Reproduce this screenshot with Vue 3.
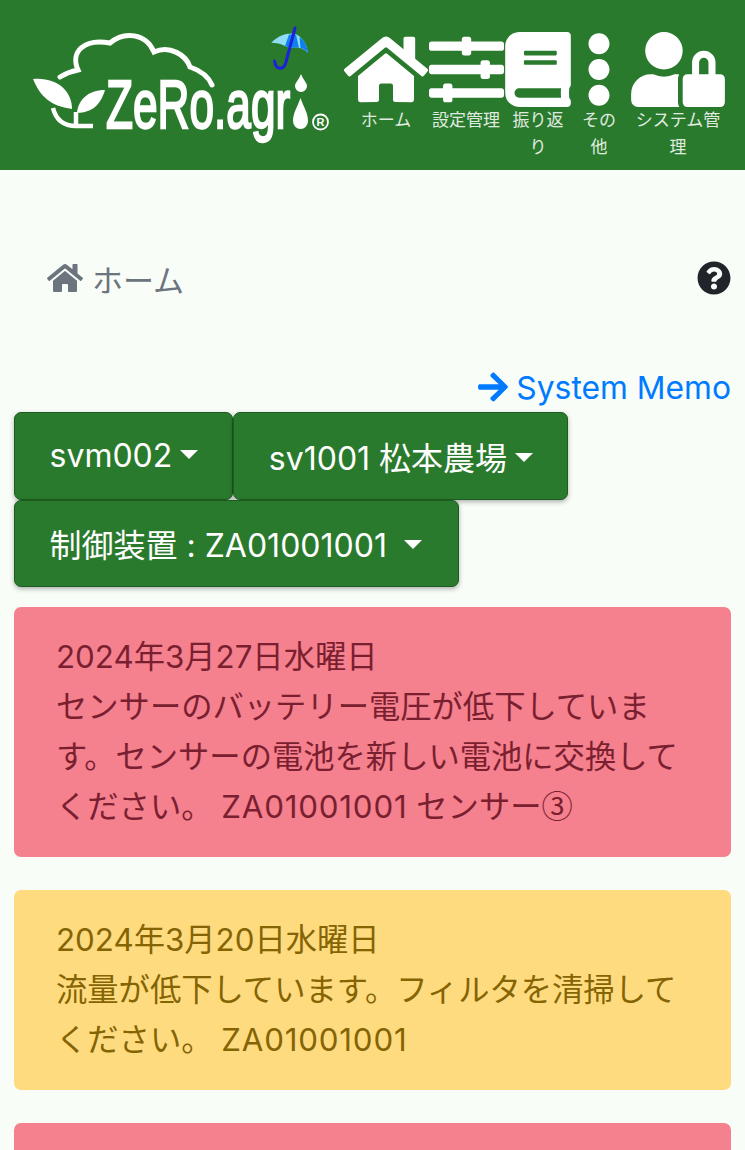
<template>
  <div class="page">
    <header class="topbar">
      <svg class="logo" viewBox="0 0 344 170" width="344" height="170">
        <!-- cloud -->
        <path class="cloud" d="M60 77 Q68 72 78 70 C70 52 84 38 110 43 C124 31 146 33 154 52 C170 45 186 55 190 67 C202 71 209 78 212 85" />
        <!-- sprout -->
        <path class="leaf" d="M33 79 C58 77 72 92 72 109 C50 106 40 96 33 79 Z" />
        <path class="leaf" d="M105 90 C88 90 78 100 77 113 C92 112 100 106 105 90 Z" />
        <path class="stem" d="M53 108 C56 120 64 126 76 126 H93 M76 112 V126" />
        <!-- name -->
        <text class="brand" transform="translate(106 128) scale(0.65 1)">ZeRo.agr</text>
        <path class="leaf" d="M301 74 C304 81 307 83 307 86 A6 6 0 0 1 295 86 C295 83 298 81 301 74 Z" />
        <path class="leaf" d="M300.5 98 C304 108 308 113 308 121 A7.5 8 0 0 1 293 121 C293 113 297 108 300.5 98 Z" />
        <circle class="reg" cx="320.5" cy="122" r="7.5" />
        <text class="reg-r" x="320.5" y="126" text-anchor="middle">R</text>
        <!-- umbrella -->
        <path d="M271.3 42.7 C278 36 285 33 294 33.5 C301 35 307 44 308 53 C305 50 302 48 299 48 C296 47 293 47 290 48 C288 47 286 46 285 46 C281 43.5 276 43 271.3 42.7 Z" fill="#8fdcf5" />
        <path d="M289 34.5 L296 34.5 L299 48 C296 47 293 47 290 48 C288 47 286 46 285 46 Z" fill="#1080f0" />
        <path d="M299.5 37 C304 40 307 46 308 53 C305 50 303 48.5 300.5 48 Z" fill="#1080f0" />
        <path d="M295 28 L286 62 C284 70 276 71 274.5 61" fill="none" stroke="#1c22dc" stroke-width="3" stroke-linecap="round" />
      </svg>

      <nav class="menu">
        <a class="menu-item home">
          <span class="icon-box">
            <svg viewBox="0 0 576 512" width="84" height="75"><path d="M280.37 148.26L96 300.11V464a16 16 0 0 0 16 16l112.06-.29a16 16 0 0 0 15.92-16V368a16 16 0 0 1 16-16h64a16 16 0 0 1 16 16v95.64a16 16 0 0 0 16 16.05L464 480a16 16 0 0 0 16-16V300L295.67 148.26a12.19 12.19 0 0 0-15.3 0zM571.6 251.47L488 182.56V44.05a12 12 0 0 0-12-12h-56a12 12 0 0 0-12 12v72.61L318.47 43a48 48 0 0 0-61 0L4.34 251.47a12 12 0 0 0-1.6 16.9l25.5 31A12 12 0 0 0 45.15 301l235.22-193.74a12.19 12.19 0 0 1 15.3 0L530.9 301a12 12 0 0 0 16.9-1.6l25.5-31a12 12 0 0 0-1.7-16.93z" /></svg>
          </span>
          <span class="menu-label">ホーム</span>
        </a>
        <a class="menu-item settings">
          <span class="icon-box">
            <svg viewBox="0 0 512 512" width="75" height="75"><path d="M496 384H160v-16c0-8.8-7.2-16-16-16h-32c-8.8 0-16 7.2-16 16v16H16c-8.8 0-16 7.2-16 16v32c0 8.8 7.2 16 16 16h80v16c0 8.8 7.2 16 16 16h32c8.8 0 16-7.2 16-16v-16h336c8.8 0 16-7.2 16-16v-32c0-8.8-7.2-16-16-16zm0-160h-80v-16c0-8.8-7.2-16-16-16h-32c-8.8 0-16 7.2-16 16v16H16c-8.8 0-16 7.2-16 16v32c0 8.8 7.2 16 16 16h336v16c0 8.8 7.2 16 16 16h32c8.8 0 16-7.2 16-16v-16h80c8.8 0 16-7.2 16-16v-32c0-8.8-7.2-16-16-16zm0-160H288V48c0-8.8-7.2-16-16-16h-32c-8.8 0-16 7.2-16 16v16H16C7.2 64 0 71.2 0 80v32c0 8.8 7.2 16 16 16h208v16c0 8.8 7.2 16 16 16h32c8.8 0 16-7.2 16-16v-16h208c8.8 0 16-7.2 16-16V80c0-8.8-7.2-16-16-16z" /></svg>
          </span>
          <span class="menu-label">設定管理</span>
        </a>
        <a class="menu-item review">
          <span class="icon-box">
            <svg viewBox="0 0 448 512" width="66" height="75"><path d="M448 360V24c0-13.3-10.7-24-24-24H96C43 0 0 43 0 96v320c0 53 43 96 96 96h328c13.3 0 24-10.7 24-24v-16c0-7.5-3.5-14.3-8.9-18.7-4.2-15.4-4.2-59.3 0-74.7 5.4-4.3 8.9-11.1 8.9-18.6zM128 134c0-3.3 2.7-6 6-6h212c3.3 0 6 2.7 6 6v20c0 3.3-2.7 6-6 6H134c-3.3 0-6-2.7-6-6v-20zm0 64c0-3.3 2.7-6 6-6h212c3.3 0 6 2.7 6 6v20c0 3.3-2.7 6-6 6H134c-3.3 0-6-2.7-6-6v-20zm253.4 250H96c-17.7 0-32-14.3-32-32 0-17.6 14.4-32 32-32h285.4c-1.9 17.1-1.9 46.9 0 64z" /></svg>
          </span>
          <span class="menu-label">振り返り</span>
        </a>
        <a class="menu-item other">
          <span class="icon-box">
            <svg viewBox="0 0 192 512" width="28" height="75"><path d="M96 184c39.8 0 72 32.2 72 72s-32.2 72-72 72-72-32.2-72-72 32.2-72 72-72zM24 80c0 39.8 32.2 72 72 72s72-32.2 72-72S135.8 8 96 8 24 40.2 24 80zm0 352c0 39.8 32.2 72 72 72s72-32.2 72-72-32.2-72-72-72-72 32.2-72 72z" /></svg>
          </span>
          <span class="menu-label">その他</span>
        </a>
        <a class="menu-item system">
          <span class="icon-box">
            <svg viewBox="0 0 640 512" width="94" height="75"><path d="M224 256A128 128 0 1 0 96 128a128 128 0 0 0 128 128zm96 64a63.08 63.08 0 0 1 8.1-30.5c-4.8-.5-9.5-1.5-14.5-1.5h-16.7a174.08 174.08 0 0 1-145.8 0h-16.7A134.43 134.43 0 0 0 0 422.4V464a48 48 0 0 0 48 48h280.9a63.54 63.54 0 0 1-8.9-32zm288-32h-32v-80a80 80 0 0 0-160 0v80h-32a32 32 0 0 0-32 32v160a32 32 0 0 0 32 32h224a32 32 0 0 0 32-32V320a32 32 0 0 0-32-32zM528 288H464v-80a32 32 0 0 1 64 0z" /></svg>
          </span>
          <span class="menu-label">システム管理</span>
        </a>
      </nav>
    </header>

    <main class="content">
      <div class="crumb-row">
        <div class="crumb">
          <svg viewBox="0 0 576 512" width="36" height="32"><path d="M280.37 148.26L96 300.11V464a16 16 0 0 0 16 16l112.06-.29a16 16 0 0 0 15.92-16V368a16 16 0 0 1 16-16h64a16 16 0 0 1 16 16v95.64a16 16 0 0 0 16 16.05L464 480a16 16 0 0 0 16-16V300L295.67 148.26a12.19 12.19 0 0 0-15.3 0zM571.6 251.47L488 182.56V44.05a12 12 0 0 0-12-12h-56a12 12 0 0 0-12 12v72.61L318.47 43a48 48 0 0 0-61 0L4.34 251.47a12 12 0 0 0-1.6 16.9l25.5 31A12 12 0 0 0 45.15 301l235.22-193.74a12.19 12.19 0 0 1 15.3 0L530.9 301a12 12 0 0 0 16.9-1.6l25.5-31a12 12 0 0 0-1.7-16.93z" /></svg>
          <span>ホーム</span>
        </div>
        <svg class="help" viewBox="0 0 512 512" width="34" height="34"><path d="M504 256c0 136.997-111.043 248-248 248S8 392.997 8 256C8 119.083 119.043 8 256 8s248 111.083 248 248zM262.655 90c-54.497 0-89.255 22.957-116.549 63.758-3.536 5.286-2.353 12.415 2.715 16.258l34.699 26.31c5.205 3.947 12.621 3.008 16.665-2.122 17.864-22.658 30.113-35.797 57.303-35.797 20.429 0 45.698 13.148 45.698 32.958 0 14.976-12.363 22.667-32.534 33.976C247.128 238.528 216 254.941 216 296v4c0 6.627 5.373 12 12 12h56c6.627 0 12-5.373 12-12v-1.333c0-28.462 83.186-29.647 83.186-106.667 0-58.002-60.165-102-116.531-102zM256 338c-25.365 0-46 20.635-46 46 0 25.364 20.635 46 46 46s46-20.636 46-46c0-25.365-20.635-46-46-46z" /></svg>
      </div>

      <a class="memo-link">
        <svg viewBox="0 0 448 512" width="30" height="34"><path d="M190.5 66.9l22.2-22.2c9.4-9.4 24.6-9.4 33.9 0L441 239c9.4 9.4 9.4 24.6 0 33.9L246.6 467.3c-9.4 9.4-24.6 9.4-33.9 0l-22.2-22.2c-9.5-9.5-9.3-25 .4-34.3L311.4 296H24c-13.3 0-24-10.7-24-24v-32c0-13.3 10.7-24 24-24h287.4L190.9 101.2c-9.8-9.3-10-24.8-.4-34.3z" /></svg>
        <span>System Memo</span>
      </a>

      <div class="selectors">
        <button v-for="s in selectors" :key="s" class="select-btn">{{ s }}<i class="caret"></i></button>
      </div>

      <div v-for="a in alerts" :key="a.date" class="alert" :class="a.type">
        {{ a.date }}<br />{{ a.text }} <span class="code">ZA01001001</span>
        <template v-if="a.sensor"> センサー<span class="mark">{{ a.sensor }}</span></template>
      </div>
      <div class="alert danger tail"></div>
    </main>
  </div>
</template>

<script setup>
const selectors = ['svm002', 'sv1001 松本農場', '制御装置 : ZA01001001 ']

const alerts = [
  {
    type: 'danger',
    date: '2024年3月27日水曜日',
    text: 'センサーのバッテリー電圧が低下しています。センサーの電池を新しい電池に交換してください。',
    sensor: '③'
  },
  {
    type: 'warning',
    date: '2024年3月20日水曜日',
    text: '流量が低下しています。フィルタを清掃してください。'
  }
]
</script>

<style>
html,
body {
  margin: 0;
  overflow: hidden;
  background: #f8fdf8;
}
</style>

<style scoped>
.page {
  width: 745px;
  height: 1150px;
  overflow: hidden;
  font-family: Inter, "Noto Sans CJK JP", sans-serif;
  background: #f8fdf8;
  color: #212529;
}

/* header */
.topbar {
  display: flex;
  height: 170px;
  background: #2a7a2d;
}

.logo {
  flex: none;
}

.cloud {
  fill: none;
  stroke: #fff;
  stroke-width: 5;
  stroke-linecap: round;
}

.leaf {
  fill: #fff;
}

.stem {
  fill: none;
  stroke: #fff;
  stroke-width: 4.5;
}

.brand {
  font-family: "Liberation Sans", sans-serif;
  font-size: 68px;
  fill: #fff;
  stroke: #fff;
  stroke-width: 2;
  vector-effect: non-scaling-stroke;
}

.reg {
  fill: none;
  stroke: #fff;
  stroke-width: 1.8;
}

.reg-r {
  font-family: "Liberation Sans", sans-serif;
  font-size: 11px;
  font-weight: 700;
  fill: #fff;
}

.menu {
  display: flex;
  padding-top: 32px;
}

.menu-item {
  display: block;
  text-align: center;
  color: #fff;
}

.icon-box {
  display: flex;
  justify-content: center;
  height: 75px;
}

.icon-box svg {
  flex: none;
  fill: #fff;
}

.menu-label {
  display: block;
  font-size: 17px;
  line-height: 27px;
  opacity: 0.85;
}

.home {
  width: 84px;
}

.settings {
  width: 76px;
}

.review {
  width: 66px;
  margin-left: 1px;
}

.other {
  width: 44px;
  margin-left: 6px;
}

.system {
  width: 94px;
  margin-left: 10px;
}

/* body */
.content {
  padding: 0 14px;
}

.crumb-row {
  display: flex;
  align-items: center;
  justify-content: space-between;
  height: 44px;
  margin-top: 86px;
  padding-left: 33px;
}

.crumb {
  display: flex;
  align-items: center;
  gap: 9px;
  font-size: 31px;
  color: #6c757d;
}

.crumb svg {
  fill: #6c757d;
}

.help {
  fill: #212529;
}

.memo-link {
  display: flex;
  align-items: center;
  justify-content: flex-end;
  gap: 8px;
  height: 42px;
  margin: 66px 0 4px;
  font-size: 31.8px;
  color: #007bff;
}

.memo-link svg {
  fill: #007bff;
}

.selectors {
  display: flex;
  flex-wrap: wrap;
  margin-bottom: 20px;
}

.select-btn {
  height: 87.5px;
  padding: 0 34px 0 34.5px;
  font: inherit;
  font-size: 32px;
  white-space: pre;
  color: #fff;
  background: #2a7a2d;
  border: 1px solid #1d5c20;
  border-radius: 7px;
  box-shadow: 0 2px 5px rgba(0, 0, 0, 0.3);
}

.select-btn:last-child {
  padding-right: 36px;
}

.caret {
  display: inline-block;
  margin-left: 8px;
  vertical-align: 8px;
  border-top: 9px solid #fff;
  border-left: 9px solid transparent;
  border-right: 9px solid transparent;
}

.alert {
  margin-bottom: 33px;
  padding: 25px 42px;
  font-size: 31.3px;
  line-height: 50px;
  border-radius: 7px;
}

.code {
  letter-spacing: 0.8px;
}

.mark {
  font-family: "Noto Sans CJK JP", sans-serif;
  line-height: 1;
}

.danger {
  color: #7a1f30;
  background: #f5808e;
}

.warning {
  color: #856404;
  background: #ffdb80;
}

.tail {
  height: 120px;
}
</style>
